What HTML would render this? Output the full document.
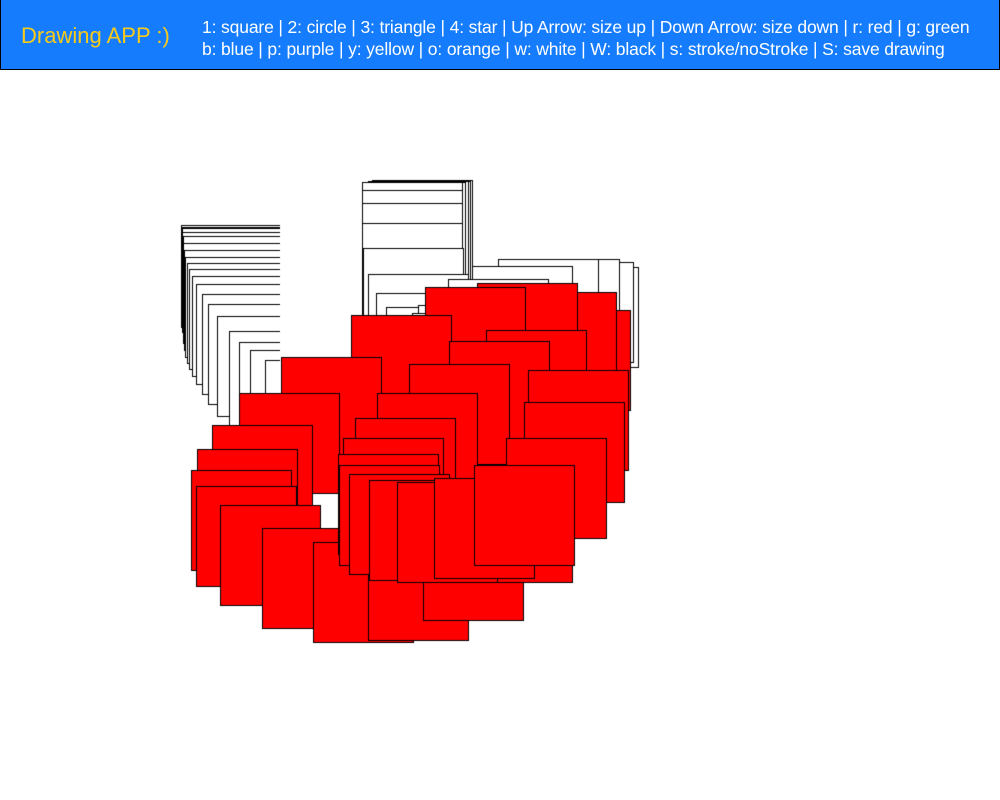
<!DOCTYPE html>
<html><head><meta charset="utf-8"><style>
html,body{margin:0;padding:0;background:#fff;width:1000px;height:800px;overflow:hidden;}
#hdr{position:absolute;left:0;top:0;width:998px;height:69px;background:#157cfd;border:1px solid #000;border-top:none;}
#t{position:absolute;left:20px;top:23px;font:22px "Liberation Sans",sans-serif;color:#f7cb1a;white-space:nowrap;}
.l{position:absolute;left:201px;font:17.5px "Liberation Sans",sans-serif;color:#fff;white-space:nowrap;letter-spacing:-0.14px;}
canvas{position:absolute;left:0;top:0;}
</style></head><body>
<canvas id="c" width="1000" height="800"></canvas>
<div id="hdr">
<div id="t">Drawing APP :)</div>
<div class="l" style="top:17px">1: square | 2: circle | 3: triangle | 4: star | Up Arrow: size up | Down Arrow: size down | r: red | g: green</div>
<div class="l" style="top:39px">b: blue | p: purple | y: yellow | o: orange | w: white | W: black | s: stroke/noStroke | S: save drawing</div>
</div>
<script>
var c=document.getElementById('c').getContext('2d');
c.lineWidth=1;c.strokeStyle='#000';
function sq(x,y,col){c.fillStyle=col;c.fillRect(x,y,100,100);c.strokeRect(x+0.5,y+0.5,100,100);}
var L=[[181,225],[181,227],[182,228],[182,232],[183,236],[183,243],[184,250],[185,257],[187,263],[189,269],[192,276],[196,284],[202,294],[208,304],[217,316],[229,331],[239,342],[250,350],[265,360]];
c.save();c.beginPath();c.rect(0,0,280,800);c.clip();
L.forEach(function(p){sq(p[0],p[1],'#fff');});
c.restore();
var M=[[372,180],[370,181],[368,181],[365,182],[362,182],[362,190],[362,203],[362,223],[363,248],[368,274],[376,293],[386,307],[418,305],[412,313]];
M.forEach(function(p){sq(p[0],p[1],'#fff');});
var R=[[538,267],[533,262],[519,259],[498,259],[472,266],[448,279]];
R.forEach(function(p){sq(p[0],p[1],'#fff');});
var red=[[530,310],[516,292],[477,283],[425,287],[351,315],[486,330],[449,341],[409,364],[281,357],[377,393],[239,393],[355,418],[212,425],[343,438],[197,449],[191,470],[196,486],[220,505],[262,528],[313,542],[368,540],[423,520],[528,370],[524,402],[506,438],[472,482],[338,454],[339,465],[349,474],[369,480],[397,482],[434,478],[474,465]];
red.forEach(function(p){sq(p[0],p[1],'#ff0000');});
</script>
</body></html>
